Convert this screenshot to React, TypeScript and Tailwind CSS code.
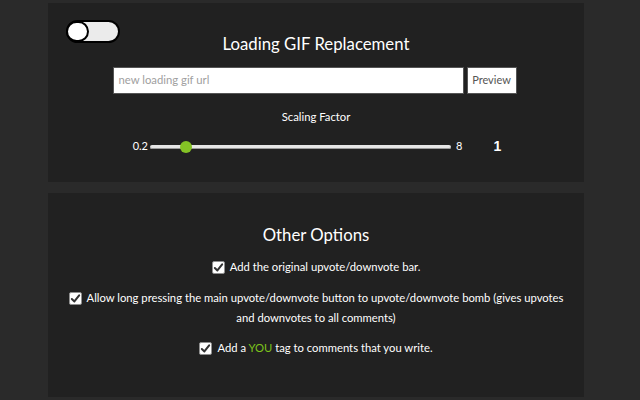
import React from 'react';

const font = { fontFamily: 'Lato, "Open Sans", sans-serif' };

const Check: React.FC = () => (
  <span className="inline-flex h-[13px] w-[13px] shrink-0 items-center justify-center rounded-[2px] border border-[#8f8f8f] bg-white">
    <svg viewBox="0 0 12 12" className="h-[11px] w-[11px]">
      <path d="M2 6.5 L4.8 9.2 L10 2.5" fill="none" stroke="#333" strokeWidth="2.2" strokeLinecap="round" strokeLinejoin="round" />
    </svg>
  </span>
);

const App: React.FC = () => {
  return (
    <div className="h-[400px] w-[640px] overflow-hidden bg-[#2a2a2a] pt-[3px] text-white" style={font}>
      <div className="ml-[48px] w-[536px]">
        <section className="h-[179px] bg-[#212121] pt-[17px]">
          <div className="grid grid-cols-[1fr_auto_1fr] items-start px-[18px]">
            <div className="flex h-[23px] w-[54px] items-center rounded-full border-2 border-black bg-[#ebebeb]">
              <span className="h-[21px] w-[23px] rounded-full border-2 border-black bg-white -ml-[2px]" />
            </div>
            <h1 className="mt-[12px] text-[16.75px] leading-[24px]">Loading GIF Replacement</h1>
            <div />
          </div>
          <div className="mt-[11px] flex justify-center gap-[3px] pr-[3px]">
            <div className="flex h-[27px] w-[351px] items-center border border-[#555] bg-white px-[5px] text-[11.3px] text-[#a0a0a0]">
              new loading gif url
            </div>
            <div className="flex h-[27px] w-[50px] items-center justify-center border border-[#555] bg-white text-[11px] text-[#555]">
              Preview
            </div>
          </div>
          <div className="mt-[14px] text-center text-[11.3px] leading-[18px]">Scaling Factor</div>
          <div className="mt-[10px] flex items-center text-[11px]">
            <span className="w-[100px] text-right">0.2</span>
            <div className="relative ml-[2px] h-[4px] w-[301px] rounded-[2px] bg-[#e6e6e6] shadow-[inset_0_-1px_0_#9a9a9a]">
              <span className="absolute left-[30px] top-1/2 h-[12px] w-[12px] -translate-y-1/2 rounded-full bg-[#84c225]" />
            </div>
            <span className="ml-[5px]">8</span>
            <span className="ml-[31px] text-[14px] font-bold" style={{ fontFamily: '"Liberation Sans", sans-serif' }}>1</span>
          </div>
        </section>
        <section className="mt-[11px] h-[204px] bg-[#212121] pt-[30px] text-[11.25px]">
          <h2 className="text-center text-[16.75px] leading-[24px]">Other Options</h2>
          <div className="mt-[11px] flex items-center justify-center gap-[5px] leading-[18px]">
            <Check />
            <span>Add the original upvote/downvote bar.</span>
          </div>
          <div className="mt-[12px] px-[18px] text-center leading-[20px]">
            <span className="inline-flex align-[-2px] mr-[5px]"><Check /></span>
            Allow long pressing the main upvote/downvote button to upvote/downvote bomb (gives upvotes and downvotes to all comments)
          </div>
          <div className="mt-[11px] flex items-center justify-center gap-[5px] leading-[18px]">
            <Check />
            <span>
              Add a <span className="text-[#7cc21b]">YOU</span> tag to comments that you write.
            </span>
          </div>
        </section>
      </div>
    </div>
  );
};

export default App;
